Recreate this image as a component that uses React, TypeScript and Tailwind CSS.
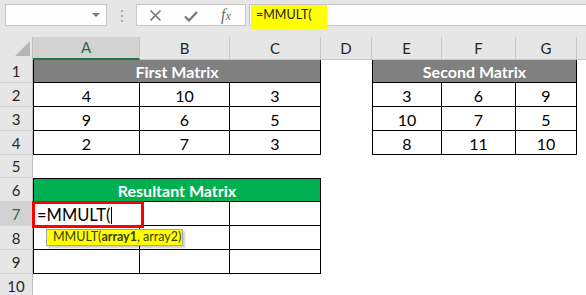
import React from "react";

const first = [
  [4, 10, 3],
  [9, 6, 5],
  [2, 7, 3],
];

const second = [
  [3, 6, 9],
  [10, 7, 5],
  [8, 11, 10],
];

const firstCols = ["col-start-2", "col-start-3", "col-start-4"];
const secondCols = ["col-start-6", "col-start-7", "col-start-8"];
const dataRows = ["row-start-3", "row-start-4", "row-start-5"];
const resultRows = ["row-start-8", "row-start-9", "row-start-10"];

const colHeaders = [
  { label: "A", col: "col-start-2", active: true },
  { label: "B", col: "col-start-3" },
  { label: "C", col: "col-start-4" },
  { label: "D", col: "col-start-5" },
  { label: "E", col: "col-start-6" },
  { label: "F", col: "col-start-7" },
  { label: "G", col: "col-start-8" },
];

const rowHeaders = [
  { label: "1", row: "row-start-2" },
  { label: "2", row: "row-start-3" },
  { label: "3", row: "row-start-4" },
  { label: "4", row: "row-start-5" },
  { label: "5", row: "row-start-6" },
  { label: "6", row: "row-start-7" },
  { label: "7", row: "row-start-8", active: true },
  { label: "8", row: "row-start-9" },
  { label: "9", row: "row-start-10" },
  { label: "10", row: "row-start-11" },
];

function FormulaBar() {
  return (
    <div className="flex h-[37px] items-start bg-[#e6e6e6] pt-[4px]">
      {/* name box */}
      <div className="ml-[5px] flex h-[22px] w-[102px] items-center justify-end border border-[#c6c6c6] bg-[#fdfdfd] pr-[6px]">
        <div className="h-0 w-0 border-x-[4px] border-t-[4px] border-x-transparent border-t-[#7a7a7a]" />
      </div>
      <div className="ml-[14px] mt-[6px] flex flex-col gap-[3px]">
        <div className="h-[2px] w-[2px] bg-[#a8a8a8]" />
        <div className="h-[2px] w-[2px] bg-[#a8a8a8]" />
        <div className="h-[2px] w-[2px] bg-[#a8a8a8]" />
      </div>
      {/* cancel / enter / fx */}
      <div className="ml-[13px] flex h-[22px] w-[110px] items-center border border-[#c6c6c6] bg-[#fdfdfd] pl-[12px]">
        <svg width="13" height="13" viewBox="0 0 13 13" className="mt-[1px]">
          <path d="M1.5 1.5 L11.5 11.5 M11.5 1.5 L1.5 11.5" stroke="#767676" strokeWidth="1.6" fill="none" />
        </svg>
        <svg width="14" height="11" viewBox="0 0 14 11" className="ml-[22px] mt-[2px]">
          <path d="M1 5.5 L5 9.5 L13 1" stroke="#767676" strokeWidth="2.2" fill="none" />
        </svg>
        <span className="ml-[23px] font-['Liberation_Serif',serif] text-[16px] italic leading-none text-[#6a6a6a]">
          f<span className="text-[12px]">x</span>
        </span>
      </div>
      {/* formula input */}
      <div className="relative ml-[3px] h-[22px] flex-1 border border-r-0 border-[#c6c6c6] bg-[#fdfdfd]">
        <div className="absolute left-[1px] top-[0px] h-[24px] w-[76px] bg-[#ffff00]" />
        <span className="absolute left-[6px] top-[4px] font-['Lato',sans-serif] text-[12.5px] leading-none text-[#222]">
          =MMULT(
        </span>
      </div>
    </div>
  );
}

export default function App() {
  return (
    <div className="h-[295px] w-[586px] overflow-hidden bg-white font-['Lato',sans-serif]">
      <FormulaBar />
      <div className="grid grid-cols-[33px_107px_90px_91px_51px_70px_74px_61px_1fr] grid-rows-[23px_23px_24px_24px_24px_23px_24px_24px_24px_24px_1fr] h-[258px]">
        {/* corner */}
        <div className="col-start-1 row-start-1 relative border-r border-[#bdbdbd] bg-[#e6e6e6]">
          <div className="absolute left-[15px] top-[4px] h-0 w-0 border-b-[15px] border-l-[15px] border-b-[#b6b6b6] border-l-transparent" />
        </div>

        {colHeaders.map((h) => (
          <div
            key={h.label}
            className={`${h.col} row-start-1 flex items-center justify-center border-r border-[#c8c8c8] text-[15px] ${
              h.active
                ? "border-b-2 border-b-[#217346] bg-[#d2d2d2] text-[#1f6b43]"
                : "border-b border-b-[#c8c8c8] bg-[#e6e6e6] text-[#262626]"
            }`}
          >
            {h.label}
          </div>
        ))}
        <div className="col-start-9 row-start-1 border-b border-[#c8c8c8] bg-[#e6e6e6]" />

        {rowHeaders.map((h) => (
          <div
            key={h.label}
            className={`col-start-1 ${h.row} flex items-center justify-center border-b border-r border-b-[#d4d4d4] border-r-[#bdbdbd] pt-[1px] text-[15px] ${
              h.active ? "bg-[#d2d2d2] text-[#1f6b43]" : "bg-[#e6e6e6] text-[#262626]"
            }`}
          >
            {h.label}
          </div>
        ))}

        {/* First Matrix */}
        <div className="col-start-2 col-span-3 row-start-2 flex items-center justify-center border-x border-b border-black bg-[#808080] pt-[1px] text-[16px] font-bold text-white">
          First Matrix
        </div>
        {first.map((row, r) =>
          row.map((v, c) => (
            <div
              key={`f-${r}-${c}`}
              className={`${firstCols[c]} ${dataRows[r]} flex items-center justify-center border-b border-r border-black pt-[2px] text-[16px] text-black ${
                c === 0 ? "border-l" : ""
              }`}
            >
              {v}
            </div>
          ))
        )}

        {/* Second Matrix */}
        <div className="col-start-6 col-span-3 row-start-2 flex items-center justify-center border-x border-b border-black bg-[#808080] pt-[1px] text-[16px] font-bold text-white">
          Second Matrix
        </div>
        {second.map((row, r) =>
          row.map((v, c) => (
            <div
              key={`s-${r}-${c}`}
              className={`${secondCols[c]} ${dataRows[r]} flex items-center justify-center border-b border-r border-black pt-[2px] text-[16px] text-black ${
                c === 0 ? "border-l" : ""
              }`}
            >
              {v}
            </div>
          ))
        )}

        {/* Resultant Matrix */}
        <div className="col-start-2 col-span-3 row-start-7 flex items-center justify-center border border-black bg-[#00b050] pt-[1px] text-[16px] font-bold text-white">
          Resultant Matrix
        </div>
        {resultRows.map((rowCls, r) =>
          firstCols.map((colCls, c) => (
            <div
              key={`r-${r}-${c}`}
              className={`${colCls} ${rowCls} border-b border-r border-black ${c === 0 ? "border-l" : ""}`}
            />
          ))
        )}

        {/* active cell A7 in edit mode */}
        <div className="col-start-2 row-start-8 relative z-10">
          <div className="absolute -left-[1px] -top-[1px] -right-[4px] -bottom-[2px] border-[3px] border-[#ff0000] bg-white" />
          <div className="absolute left-[4px] top-[3px] flex items-center text-[16.5px] leading-[20px] text-black">
            =MMULT(
            <span className="ml-[1px] inline-block h-[17px] w-[1px] bg-black" />
          </div>
          <div className="absolute left-[13px] top-[27px] flex h-[17px] w-[137px] items-center whitespace-nowrap border border-[#a6a6a6] bg-[#ffff00] pl-[6px] text-[12.5px] leading-none text-[#3a3a1a] shadow-[2px_2px_2px_rgba(0,0,0,0.2)]">
            MMULT(<b>array1</b>, array2)
          </div>
        </div>
      </div>
    </div>
  );
}
